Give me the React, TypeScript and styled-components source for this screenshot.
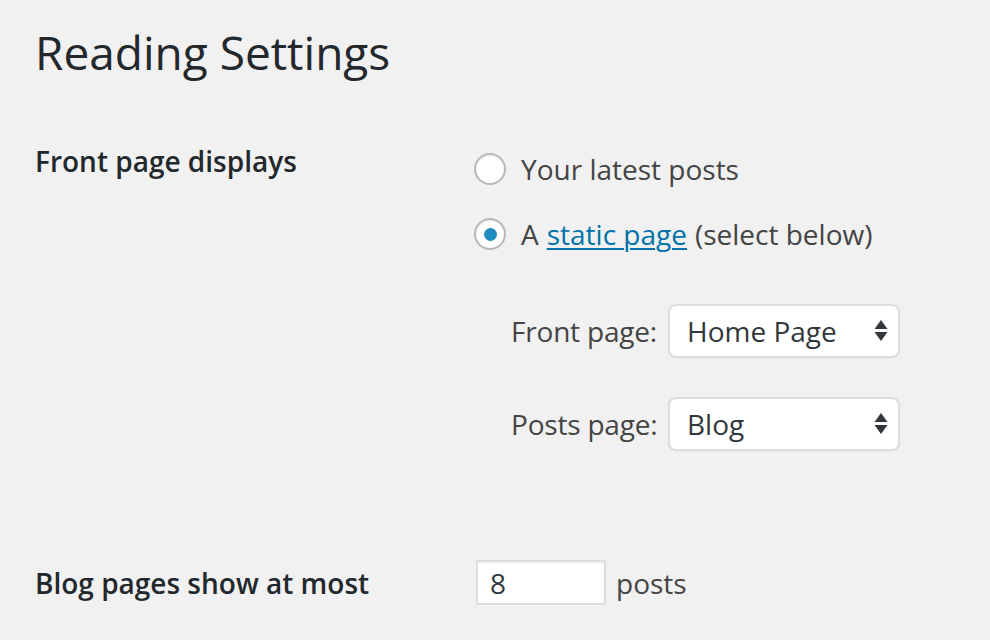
import React from "react";
import styled, { createGlobalStyle } from "styled-components";

const Global = createGlobalStyle`
  html, body { margin: 0; padding: 0; background: #f1f1f1; }
  body { font-family: "Open Sans", "Liberation Sans", sans-serif; color: #444; }
  * { box-sizing: border-box; }
`;

const Page = styled.div`
  padding: 22px 0 0 35px;
  width: 990px;
  height: 640px;
  overflow: hidden;
`;

const Title = styled.h1`
  margin: 0;
  font-size: 46px;
  line-height: 60px;
  font-weight: 400;
  color: #23282d;
`;

const Form = styled.div`
  display: flex;
  flex-direction: column;
  margin-top: 59px;
`;

const Row = styled.div<{ $center?: boolean; $gap?: number }>`
  display: grid;
  grid-template-columns: 439px 1fr;
  align-items: ${(p) => (p.$center ? "center" : "start")};
  margin-top: ${(p) => p.$gap ?? 0}px;
`;

const Label = styled.div`
  font-size: 28px;
  line-height: 40px;
  font-weight: 600;
  color: #23282d;
`;

const Options = styled.div`
  display: flex;
  flex-direction: column;
  padding-top: 8px;
  gap: 25px;
`;

const RadioLine = styled.label`
  display: flex;
  align-items: center;
  gap: 15px;
  font-size: 28px;
  line-height: 40px;
  color: #444;
`;

const RadioCircle = styled.span<{ $checked?: boolean }>`
  width: 32px;
  height: 32px;
  border-radius: 50%;
  border: 2px solid #b4b9be;
  background: #fff;
  box-shadow: inset 0 1px 2px rgba(0, 0, 0, 0.1);
  display: flex;
  align-items: center;
  justify-content: center;
  flex-shrink: 0;
  &::after {
    content: "";
    display: ${(p) => (p.$checked ? "block" : "none")};
    width: 13px;
    height: 13px;
    border-radius: 50%;
    background: #1e8cbe;
  }
`;

const Link = styled.a`
  color: #0073aa;
  text-decoration: underline;
  text-underline-offset: 3px;
  text-decoration-thickness: 2px;
  margin: 0 8px 0 8px;
`;

const Selects = styled.div`
  display: flex;
  flex-direction: column;
  gap: 39px;
  margin-top: 50px;
`;

const SelectRow = styled.div`
  display: flex;
  align-items: center;
  padding-left: 37px;
`;

const SmallLabel = styled.span`
  width: 157px;
  flex-shrink: 0;
  white-space: nowrap;
  font-size: 28px;
  line-height: 40px;
  letter-spacing: -0.2px;
  color: #444;
`;

const SelectBox = styled.div`
  position: relative;
  width: 232px;
  height: 54px;
  border: 2px solid #ddd;
  border-radius: 8px;
  background: #fff;
  box-shadow: 0 1px 1px rgba(0, 0, 0, 0.04);
  display: flex;
  align-items: center;
  padding-left: 17px;
  font-size: 28px;
  color: #32373c;
`;

const Arrows = styled.svg`
  position: absolute;
  right: 10px;
  top: 50%;
  transform: translateY(-50%);
`;

const NumberInput = styled.div`
  width: 130px;
  height: 45px;
  border: 2px solid #ddd;
  background: #fff;
  box-shadow: inset 0 1px 2px rgba(0, 0, 0, 0.07);
  display: flex;
  align-items: center;
  padding-left: 12px;
  font-size: 28px;
  color: #32373c;
`;

const InputLine = styled.div`
  display: flex;
  align-items: center;
  gap: 10px;
  margin-left: 2px;
  font-size: 28px;
  line-height: 40px;
  color: #444;
`;

function Select({ value }: { value: string }) {
  return (
    <SelectBox>
      {value}
      <Arrows width="14" height="22" viewBox="0 0 14 22">
        <polygon points="7,0 13.5,9 0.5,9" fill="#32373c" />
        <polygon points="0.5,12 13.5,12 7,21" fill="#32373c" />
      </Arrows>
    </SelectBox>
  );
}

export default function App() {
  return (
    <Page>
      <Global />
      <Title>Reading Settings</Title>
      <Form>
        <Row>
          <Label>Front page displays</Label>
          <div>
            <Options>
              <RadioLine>
                <RadioCircle />
                Your latest posts
              </RadioLine>
              <RadioLine>
                <RadioCircle $checked />
                <span>
                  A<Link href="#">static page</Link>(select below)
                </span>
              </RadioLine>
            </Options>
            <Selects>
              <SelectRow>
                <SmallLabel>Front page:</SmallLabel>
                <Select value="Home Page" />
              </SelectRow>
              <SelectRow>
                <SmallLabel>Posts page:</SmallLabel>
                <Select value="Blog" />
              </SelectRow>
            </Selects>
          </div>
        </Row>
        <Row $center $gap={109}>
          <Label>Blog pages show at most</Label>
          <InputLine>
            <NumberInput>8</NumberInput>
            posts
          </InputLine>
        </Row>
      </Form>
    </Page>
  );
}
